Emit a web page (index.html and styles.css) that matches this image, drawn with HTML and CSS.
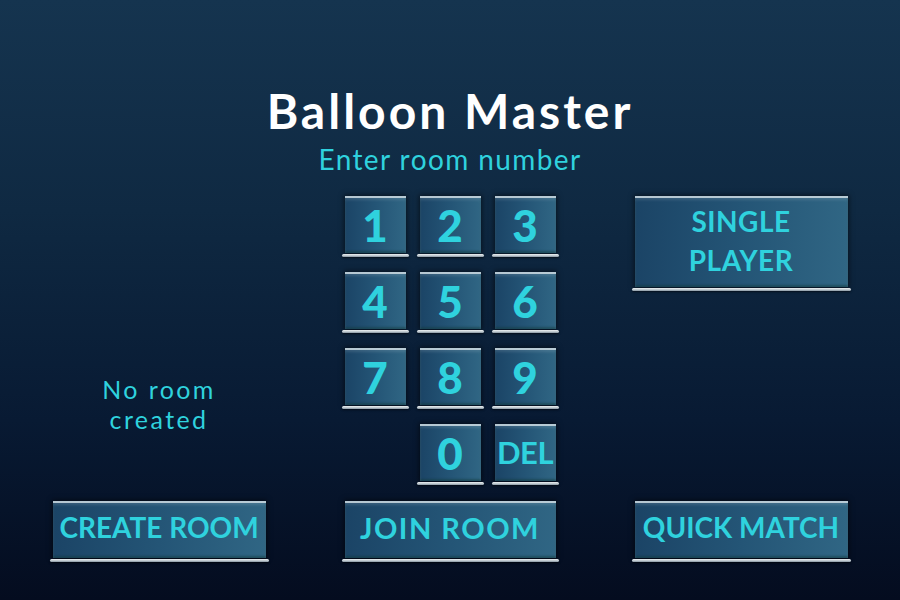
FILE: index.html
```html
<!DOCTYPE html>
<html lang="en">
<head>
<meta charset="utf-8">
<title>Balloon Master</title>
<link rel="stylesheet" href="styles.css">
</head>
<body>
<div class="screen">
  <h1 class="title">Balloon Master</h1>
  <p class="subtitle">Enter room number</p>
  <div class="board">
    <div class="keypad">
      <div class="btn key">1</div>
      <div class="btn key">2</div>
      <div class="btn key">3</div>
      <div class="btn key">4</div>
      <div class="btn key">5</div>
      <div class="btn key">6</div>
      <div class="btn key">7</div>
      <div class="btn key">8</div>
      <div class="btn key">9</div>
      <div class="btn key zero">0</div>
      <div class="btn key del">DEL</div>
    </div>
    <div class="btn wide single">SINGLE<br>PLAYER</div>
    <div class="status">No room<br>created</div>
    <div class="btn wide create">CREATE ROOM</div>
    <div class="btn wide join">JOIN ROOM</div>
    <div class="btn wide quick">QUICK MATCH</div>
  </div>
</div>
</body>
</html>
```

FILE: styles.css
```css
html, body {
  margin: 0;
  padding: 0;
}

body {
  width: 900px;
  height: 600px;
  overflow: hidden;
  background: linear-gradient(180deg, #15344f 0%, #0f2942 35%, #081a33 70%, #040c1f 100%);
  font-family: "Lato", "DejaVu Sans", sans-serif;
}

.screen {
  width: 900px;
  height: 600px;
  display: flex;
  flex-direction: column;
  align-items: center;
}

.title {
  margin: 84px 0 0;
  font-size: 48px;
  line-height: 54px;
  font-weight: 700;
  color: #ffffff;
  letter-spacing: 3px;
}

.subtitle {
  margin: 4px 0 0;
  font-size: 28px;
  line-height: 34px;
  color: #2fd2de;
  letter-spacing: 1.4px;
}

.board {
  margin-top: 20px;
  display: grid;
  grid-template-columns: 213px 211px 213px;
  grid-template-rows: 290px 61px;
  column-gap: 79px;
  row-gap: 15px;
}

.keypad {
  grid-column: 2;
  grid-row: 1;
  display: grid;
  grid-template-columns: repeat(3, 61px);
  grid-auto-rows: 61px;
  column-gap: 14px;
  row-gap: 15px;
}

.btn {
  position: relative;
  box-sizing: border-box;
  display: flex;
  align-items: center;
  justify-content: center;
  text-align: center;
  color: #2fd2de;
  font-weight: 700;
  background: linear-gradient(90deg, #1b4466 0%, #245576 50%, #306684 100%);
  box-shadow:
    inset 0 2px 0 rgba(205, 218, 226, 0.85),
    inset 0 4px 3px rgba(255, 255, 255, 0.12),
    inset 0 -2px 2px rgba(20, 60, 60, 0.5),
    0 0 5px 1px rgba(0, 0, 0, 0.5);
}

.btn::after {
  content: "";
  position: absolute;
  left: -3px;
  right: -3px;
  bottom: -4px;
  height: 3px;
  border-radius: 2px;
  background: linear-gradient(180deg, #eef2f4 0%, #c3ccd2 50%, #8796a2 100%);
  box-shadow: 0 1px 2px rgba(0, 0, 0, 0.5);
}

.key {
  height: 57px;
  font-size: 44px;
  font-weight: 900;
  line-height: 1;
  padding-bottom: 0;
}

.zero {
  grid-column: 2;
}

.del {
  font-size: 31px;
  font-weight: 700;
  letter-spacing: -0.5px;
}

.wide {
  font-size: 28px;
  line-height: 39px;
}

.single {
  grid-column: 3;
  grid-row: 1;
  align-self: start;
  height: 91px;
  padding-bottom: 2px;
  letter-spacing: 0.5px;
}

.status {
  grid-column: 1;
  grid-row: 1;
  align-self: end;
  margin-bottom: 52px;
  text-align: center;
  color: #2fd2de;
  font-size: 25px;
  line-height: 30px;
  letter-spacing: 2.4px;
}

.create, .join, .quick {
  grid-row: 2;
  height: 57px;
  padding-bottom: 5px;
}

.create { grid-column: 1; }
.join { grid-column: 2; font-size: 29px; letter-spacing: 1.5px; }
.quick { grid-column: 3; }
```
